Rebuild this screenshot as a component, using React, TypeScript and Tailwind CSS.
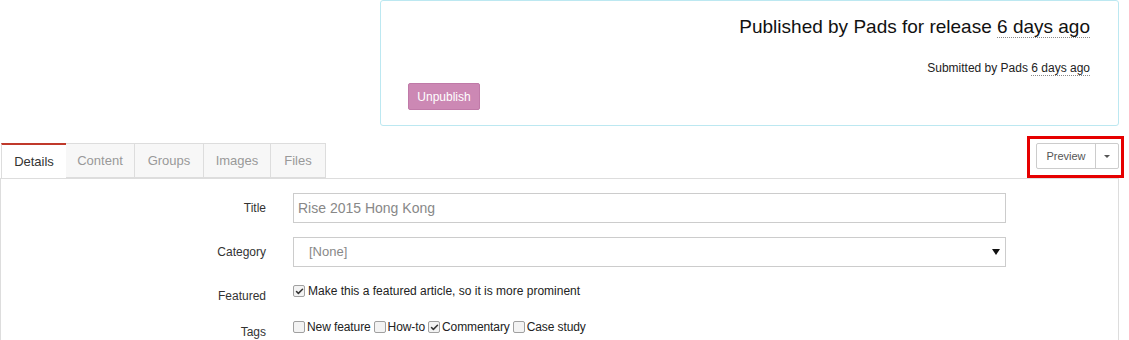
import { Check } from 'lucide-react';

const tabs = [
  { label: 'Details', w: 'w-[65px]' },
  { label: 'Content', w: 'w-[69px]' },
  { label: 'Groups', w: 'w-[69px]' },
  { label: 'Images', w: 'w-[67px]' },
  { label: 'Files', w: 'w-[55px]' },
];
const tags = [
  { label: 'New feature', checked: false },
  { label: 'How-to', checked: false },
  { label: 'Commentary', checked: true },
  { label: 'Case study', checked: false },
];

function Box({ checked, gap = 'mr-[3px]' }: { checked: boolean; gap?: string }) {
  return (
    <span className={`inline-flex items-center justify-center w-[12px] h-[12px] rounded-[2px] border border-[#a0a0a0] bg-[#f3f3f3] ${gap} shrink-0`}>
      {checked && <Check className="w-[9px] h-[9px] text-[#333]" strokeWidth={4} />}
    </span>
  );
}

export default function App() {
  return (
    <div className="w-[1129px] h-[340px] overflow-hidden bg-white text-[#333] font-['Liberation_Sans',Arial,sans-serif]">
      {/* Publish status */}
      <div className="ml-[380px] w-[739px] h-[126px] border border-[#bce8f1] rounded-[3px] pt-[14px] pr-[28px] pl-[27px]">
        <div className="text-right text-[19px] leading-[23px] text-[#111]">
          Published by Pads for release{' '}
          <span className="border-b border-dotted border-[#888]">6 days ago</span>
        </div>
        <div className="text-right text-[12px] leading-[16px] mt-[22px] text-[#222]">
          Submitted by Pads{' '}
          <span className="border-b border-dotted border-[#888]">6 days ago</span>
        </div>
        <button className="mt-[7px] h-[27px] w-[72px] rounded-[2px] bg-[#cc88b4] border border-[#c07aa8] text-white text-[12px]">
          Unpublish
        </button>
      </div>

      {/* Tabs + preview */}
      <div className="mt-[10px] flex items-end justify-between">
        <div className="flex h-[35px] items-stretch">
          {tabs.map((t, i) => (
            <div
              key={t.label}
              className={
                i === 0
                  ? `flex items-center justify-center ${t.w} ml-[1px] text-[13px] text-[#333] bg-white border-l border-[#ddd] border-t-2 border-t-[#c0392b]`
                  : `flex items-center justify-center ${t.w} text-[13px] text-[#999] bg-[#f7f7f7] border-t border-r border-b border-[#ddd]`
              }
            >
              {t.label}
            </div>
          ))}
        </div>
        <div className="mr-[5px] border-[3px] border-[#e60000] w-[97px] h-[42px] flex items-center justify-end pr-[2px] pb-[2px]">
          <div className="flex h-[26px] border border-[#ccc] rounded-[2px] bg-white">
            <div className="w-[59px] flex items-center justify-center text-[11px] text-[#555] border-r border-[#ccc]">Preview</div>
            <div className="w-[22px] flex items-center justify-center">
              <span className="w-0 h-0 border-l-[3px] border-r-[3px] border-t-[3px] border-l-transparent border-r-transparent border-t-[#555]" />
            </div>
          </div>
        </div>
      </div>

      {/* Form panel */}
      <div className="w-[1119px] border-l border-r border-t border-[#ddd] pt-[14px] h-[200px]">
        <div className="flex items-center h-[30px]">
          <label className="w-[265px] text-right text-[12px]">Title</label>
          <div className="ml-[27px] w-[713px] h-[30px] border border-[#ccc] flex items-center px-[4px] text-[14px] text-[#888]">
            Rise 2015 Hong Kong
          </div>
        </div>
        <div className="flex items-center h-[30px] mt-[14px]">
          <label className="w-[265px] text-right text-[12px]">Category</label>
          <div className="ml-[27px] w-[713px] h-[30px] border border-[#ccc] flex items-center justify-between pl-[15px] pr-[5px] text-[13px] text-[#888]">
            <span>[None]</span>
            <span className="w-0 h-0 border-l-[4px] border-r-[4px] border-t-[6px] border-l-transparent border-r-transparent border-t-[#111]" />
          </div>
        </div>
        <div className="flex items-start mt-[15px]">
          <label className="w-[265px] text-right text-[12px] mt-[5px]">Featured</label>
          <div className="ml-[27px] flex items-center text-[12px] text-[#222]">
            <Box checked />
            <span>Make this a featured article, so it is more prominent</span>
          </div>
        </div>
        <div className="flex items-start mt-[13px]">
          <label className="w-[265px] text-right text-[12px] mt-[5px]">Tags</label>
          <div className="ml-[27px] flex items-center text-[12px] text-[#222] tracking-[-0.1px]">
            {tags.map((t) => (
              <span key={t.label} className="flex items-center mr-[3px]">
                <Box checked={t.checked} gap="mr-[2px]" />
                {t.label}
              </span>
            ))}
          </div>
        </div>
      </div>
    </div>
  );
}
